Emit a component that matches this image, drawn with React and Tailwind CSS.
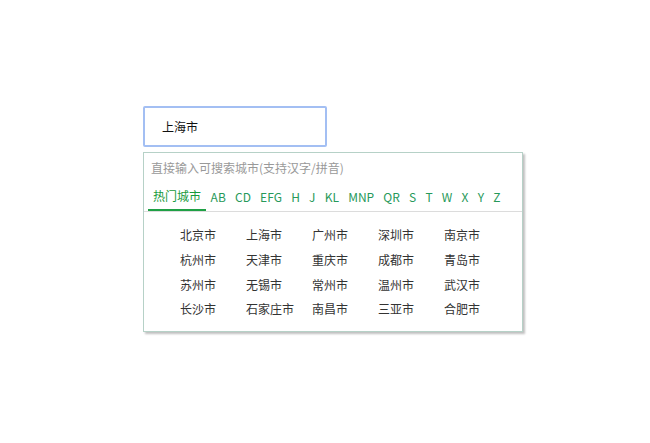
import React, { useState } from 'react';

const tabs = ['热门城市', 'AB', 'CD', 'EFG', 'H', 'J', 'KL', 'MNP', 'QR', 'S', 'T', 'W', 'X', 'Y', 'Z'];

const hotCities = [
  '北京市', '上海市', '广州市', '深圳市', '南京市',
  '杭州市', '天津市', '重庆市', '成都市', '青岛市',
  '苏州市', '无锡市', '常州市', '温州市', '武汉市',
  '长沙市', '石家庄市', '南昌市', '三亚市', '合肥市',
];

const App = () => {
  const [active, setActive] = useState('热门城市');

  return (
    <div
      className="w-[650px] h-[443px] bg-white pt-[106px] pl-[143px]"
      style={{ fontFamily: '"Noto Sans CJK SC", "Noto Sans", sans-serif' }}
    >
      {/* 输入框 */}
      <div className="w-[184px] h-[41px] border-2 border-[#a3bff3] rounded-[2px] flex items-center pl-[17px] text-[12px] text-[#111]">
        上海市
      </div>

      {/* 下拉面板 */}
      <div className="mt-[5px] w-[380px] h-[180px] border border-[#b6d1c7] bg-white shadow-[2px_2px_2px_rgba(0,0,0,0.25)]">
        <div className="h-[30px] flex items-center pl-[7px] text-[12px] text-[#999]">
          直接输入可搜索城市(支持汉字/拼音)
        </div>

        <div className="h-[29px] border-b border-[#dcdcdc] flex pl-[4px]">
          {tabs.map(t => (
            <div
              key={t}
              onClick={() => setActive(t)}
              className={
                t === active
                  ? 'h-full flex items-center px-[5px] text-[12px] text-[#179a3a] border-b-2 border-[#1fa045] cursor-pointer'
                  : 'h-full flex items-center px-[4.6px] text-[12px] text-[#27995a] cursor-pointer'
              }
            >
              {t}
            </div>
          ))}
        </div>

        <div className="grid grid-cols-[66px_66px_66px_66px_66px] pl-[36px] pt-[11px]">
          {hotCities.map(c => (
            <div key={c} className="h-[24.7px] flex items-center text-[12px] text-[#333] whitespace-nowrap cursor-pointer">
              {c}
            </div>
          ))}
        </div>
      </div>
    </div>
  );
};

export default App;
